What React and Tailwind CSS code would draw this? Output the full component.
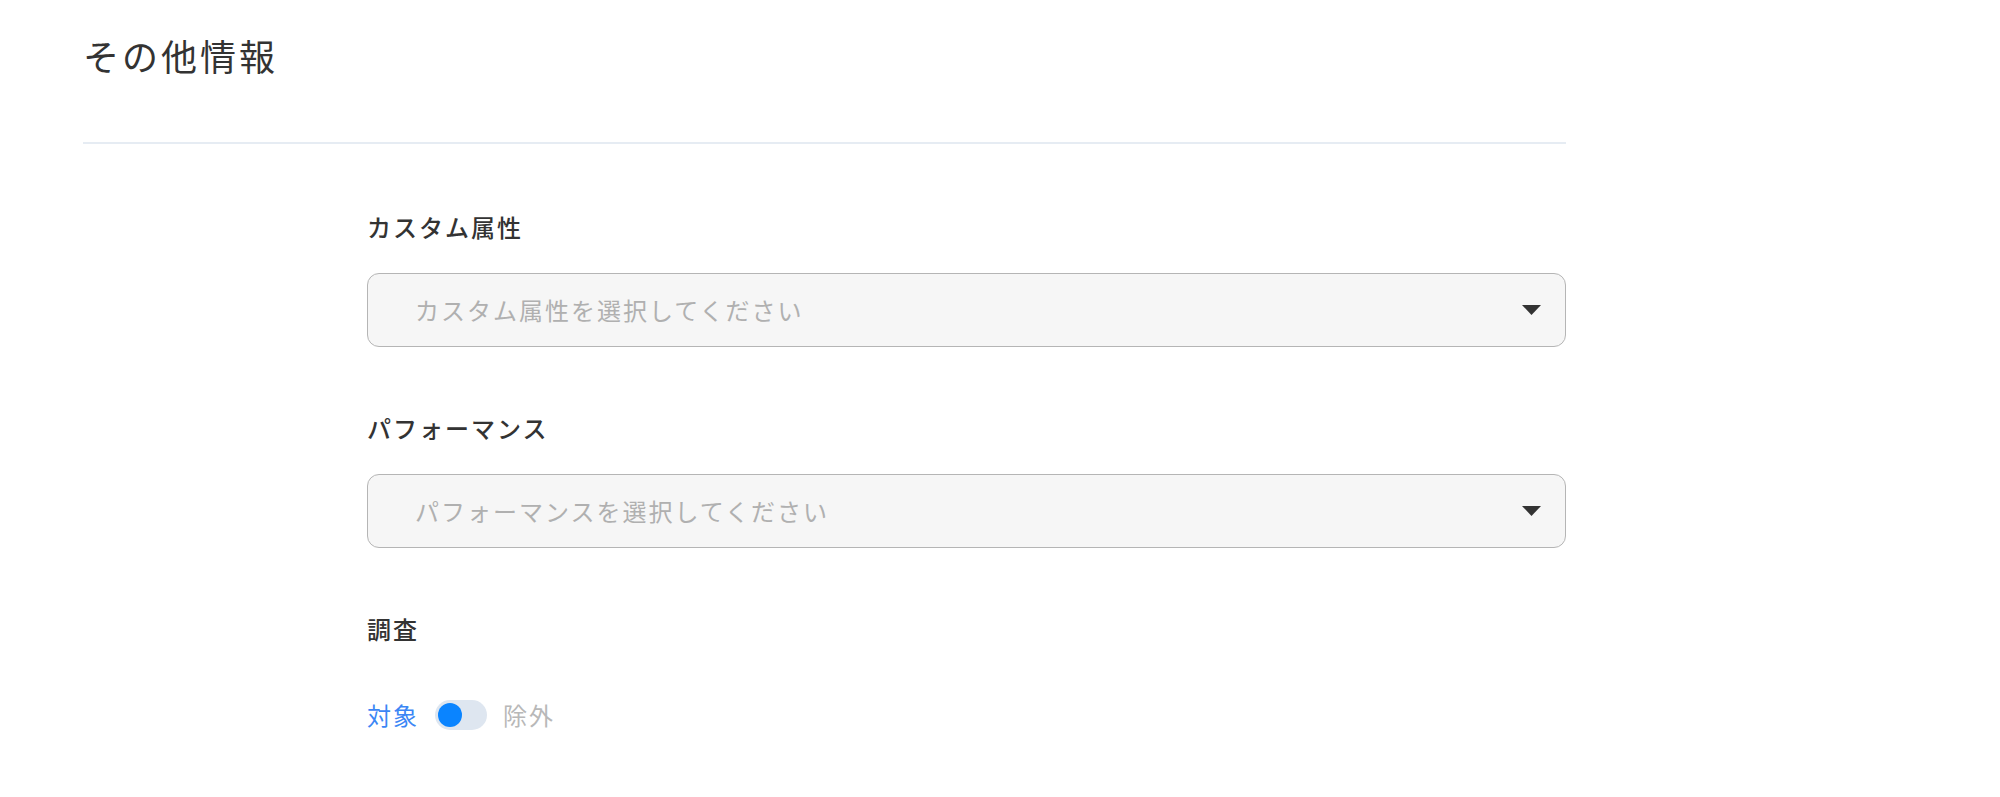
function SelectBox({ placeholder }) {
  return (
    <div className="flex h-[74px] items-center justify-between rounded-[12px] border border-[#b5b5b5] bg-[#f6f6f6] pl-[47px] pr-[24px]">
      <span className="text-[24px] tracking-[2px] text-[#b0b0b0]">{placeholder}</span>
      <svg width="19" height="10" viewBox="0 0 19 10" className="block">
        <path d="M0 0 L19 0 L9.5 10 Z" fill="#333333" />
      </svg>
    </div>
  );
}

function Field({ label, children }) {
  return (
    <div>
      <div className="text-[24px] font-medium leading-[32px] tracking-[2px] text-[#333333]">{label}</div>
      <div className="mt-[30px]">{children}</div>
    </div>
  );
}

export default function App() {
  return (
    <div
      className="min-h-screen bg-white pl-[83px] pt-[30px]"
      style={{ fontFamily: '"Noto Sans CJK JP", "Noto Sans", sans-serif' }}
    >
      <div className="w-[1483px]">
        <h1 className="text-[36px] leading-[50px] tracking-[3px] text-[#333333]">その他情報</h1>
        <div className="mt-[62px] h-[2px] bg-[#e6ecf3]" />

        <div className="flex flex-col gap-[65px] pl-[284px] pt-[67px]">
          <Field label="カスタム属性">
            <SelectBox placeholder="カスタム属性を選択してください" />
          </Field>
          <Field label="パフォーマンス">
            <SelectBox placeholder="パフォーマンスを選択してください" />
          </Field>
          <Field label="調査">
            <div className="mt-[52px] flex items-center gap-[16px]">
              <span className="text-[24px] tracking-[2px] text-[#3b86f5]">対象</span>
              <button className="flex h-[30px] w-[52px] items-center rounded-full bg-[#dee6f0] px-[3px]">
                <span className="h-[24px] w-[24px] rounded-full bg-[#0a84ff]" />
              </button>
              <span className="text-[24px] tracking-[2px] text-[#b8b8b8]">除外</span>
            </div>
          </Field>
        </div>
      </div>
    </div>
  );
}
